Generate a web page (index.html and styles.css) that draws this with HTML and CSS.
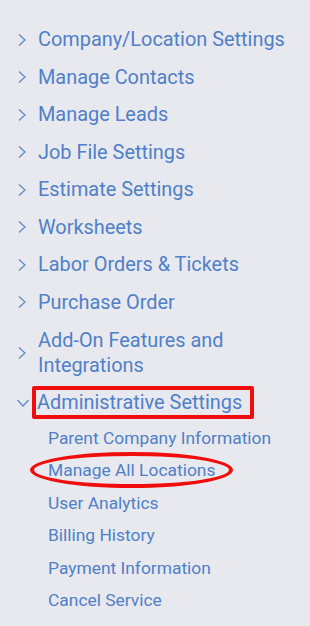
FILE: index.html
```html
<!DOCTYPE html>
<html>
<head>
<meta charset="utf-8">
<link rel="stylesheet" href="styles.css">
</head>
<body>
<nav class="menu">
  <ul class="list">
    <li class="item"><svg class="chev" viewBox="0 0 10 14"><path d="M2 1.5 L8 7 L2 12.5"/></svg><span class="label">Company/Location Settings</span></li>
    <li class="item"><svg class="chev" viewBox="0 0 10 14"><path d="M2 1.5 L8 7 L2 12.5"/></svg><span class="label">Manage Contacts</span></li>
    <li class="item"><svg class="chev" viewBox="0 0 10 14"><path d="M2 1.5 L8 7 L2 12.5"/></svg><span class="label">Manage Leads</span></li>
    <li class="item"><svg class="chev" viewBox="0 0 10 14"><path d="M2 1.5 L8 7 L2 12.5"/></svg><span class="label">Job File Settings</span></li>
    <li class="item"><svg class="chev" viewBox="0 0 10 14"><path d="M2 1.5 L8 7 L2 12.5"/></svg><span class="label">Estimate Settings</span></li>
    <li class="item"><svg class="chev" viewBox="0 0 10 14"><path d="M2 1.5 L8 7 L2 12.5"/></svg><span class="label">Worksheets</span></li>
    <li class="item"><svg class="chev" viewBox="0 0 10 14"><path d="M2 1.5 L8 7 L2 12.5"/></svg><span class="label">Labor Orders &amp; Tickets</span></li>
    <li class="item"><svg class="chev" viewBox="0 0 10 14"><path d="M2 1.5 L8 7 L2 12.5"/></svg><span class="label">Purchase Order</span></li>
    <li class="item item-multi"><svg class="chev" viewBox="0 0 10 14"><path d="M2 1.5 L8 7 L2 12.5"/></svg><span class="label">Add-On Features and<br>Integrations</span></li>
    <li class="item item-open"><svg class="chev-down" viewBox="0 0 14 10"><path d="M1.5 2 L7 8 L12.5 2"/></svg><span class="label boxed">Administrative Settings</span></li>
  </ul>
  <ul class="sub">
    <li class="sub-item">Parent Company Information</li>
    <li class="sub-item circled">Manage All Locations<span class="ring"></span></li>
    <li class="sub-item">User Analytics</li>
    <li class="sub-item">Billing History</li>
    <li class="sub-item">Payment Information</li>
    <li class="sub-item">Cancel Service</li>
  </ul>
</nav>
</body>
</html>
```
FILE: styles.css
```css
html, body {
  margin: 0;
  padding: 0;
  background: #e8e9ee;
}
body {
  width: 310px;
  height: 626px;
  overflow: hidden;
  font-family: Roboto, "Liberation Sans", sans-serif;
  color: #4f80c8;
}
.menu {
  padding-top: 21px;
}
.list, .sub {
  list-style: none;
  margin: 0;
  padding: 0;
}
.item {
  display: flex;
  align-items: center;
  height: 37.5px;
  padding-left: 17px;
  font-size: 19.9px;
}
.item-multi {
  height: 63px;
  line-height: 25px;
}
.chev {
  width: 10px;
  height: 14px;
  margin-right: 11px;
  flex: none;
  fill: none;
  stroke: #5a86c8;
  stroke-width: 1.2;
}
.chev-down {
  width: 14px;
  height: 10px;
  margin-left: -1px;
  margin-right: 2px;
  flex: none;
  fill: none;
  stroke: #5a86c8;
  stroke-width: 1.2;
}
.boxed {
  border: 4px solid #f20d0d;
  border-radius: 2px;
  padding: 0 8px 0 1px;
  line-height: 25px;
}
.sub {
  padding-left: 48px;
}
.sub-item {
  position: relative;
  font-size: 17.4px;
  height: 32.6px;
  line-height: 32.6px;
}
.ring {
  position: absolute;
  left: -18px;
  top: -1.7px;
  width: 203px;
  height: 36px;
  box-sizing: border-box;
  border: 4px solid #f20d0d;
  border-radius: 50%;
}
```
